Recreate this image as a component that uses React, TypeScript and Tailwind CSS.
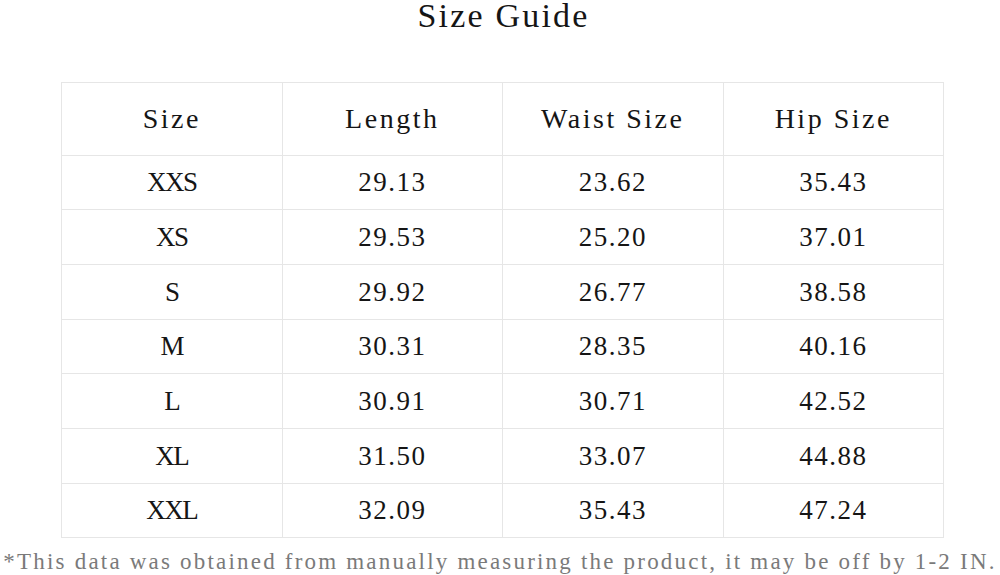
import React from 'react';

const rows = [
  { size: 'XXS', length: '29.13', waist: '23.62', hip: '35.43', h: 'h-[54px]' },
  { size: 'XS', length: '29.53', waist: '25.20', hip: '37.01', h: 'h-[55px]' },
  { size: 'S', length: '29.92', waist: '26.77', hip: '38.58', h: 'h-[55px]' },
  { size: 'M', length: '30.31', waist: '28.35', hip: '40.16', h: 'h-[54px]' },
  { size: 'L', length: '30.91', waist: '30.71', hip: '42.52', h: 'h-[55px]' },
  { size: 'XL', length: '31.50', waist: '33.07', hip: '44.88', h: 'h-[55px]' },
  { size: 'XXL', length: '32.09', waist: '35.43', hip: '47.24', h: 'h-[54px]' },
];

const headers = ['Size', 'Length', 'Waist Size', 'Hip Size'];

const App: React.FC = () => {
  return (
    <div className="w-[1000px] h-[575px] bg-white overflow-hidden font-['Liberation_Serif',serif] text-[#151515]">
      {/* Titulo */}
      <div className="pt-[1px] h-[31px] leading-[30px] text-center pl-[7px] text-[34px] tracking-[2.2px]">
        Size Guide
      </div>

      {/* Tabla */}
      <div className="mt-[51px] ml-[61px] w-[883px] border-l border-t border-[#e6e6e6]">
        <div className="grid grid-cols-4 h-[73px]">
          {headers.map((h) => (
            <div
              key={h}
              className="flex items-center justify-center border-r border-b border-[#e6e6e6] text-[28px] tracking-[2.5px]"
            >
              {h}
            </div>
          ))}
        </div>
        {rows.map((r) => (
          <div key={r.size} className={`grid grid-cols-4 ${r.h}`}>
            <div className="flex items-center justify-center border-r border-b border-[#e6e6e6] text-[27px] tracking-[-1.5px]">
              {r.size}
            </div>
            {[r.length, r.waist, r.hip].map((v, i) => (
              <div
                key={i}
                className="flex items-center justify-center border-r border-b border-[#e6e6e6] text-[27px] tracking-[1.5px]"
              >
                {v}
              </div>
            ))}
          </div>
        ))}
      </div>

      {/* Nota */}
      <div className="mt-[12px] whitespace-nowrap text-center text-[23px] tracking-[2.2px] text-[#7a7a7a] leading-none">
        *This data was obtained from manually measuring the product, it may be off by 1-2 IN.
      </div>
    </div>
  );
};

export default App;
